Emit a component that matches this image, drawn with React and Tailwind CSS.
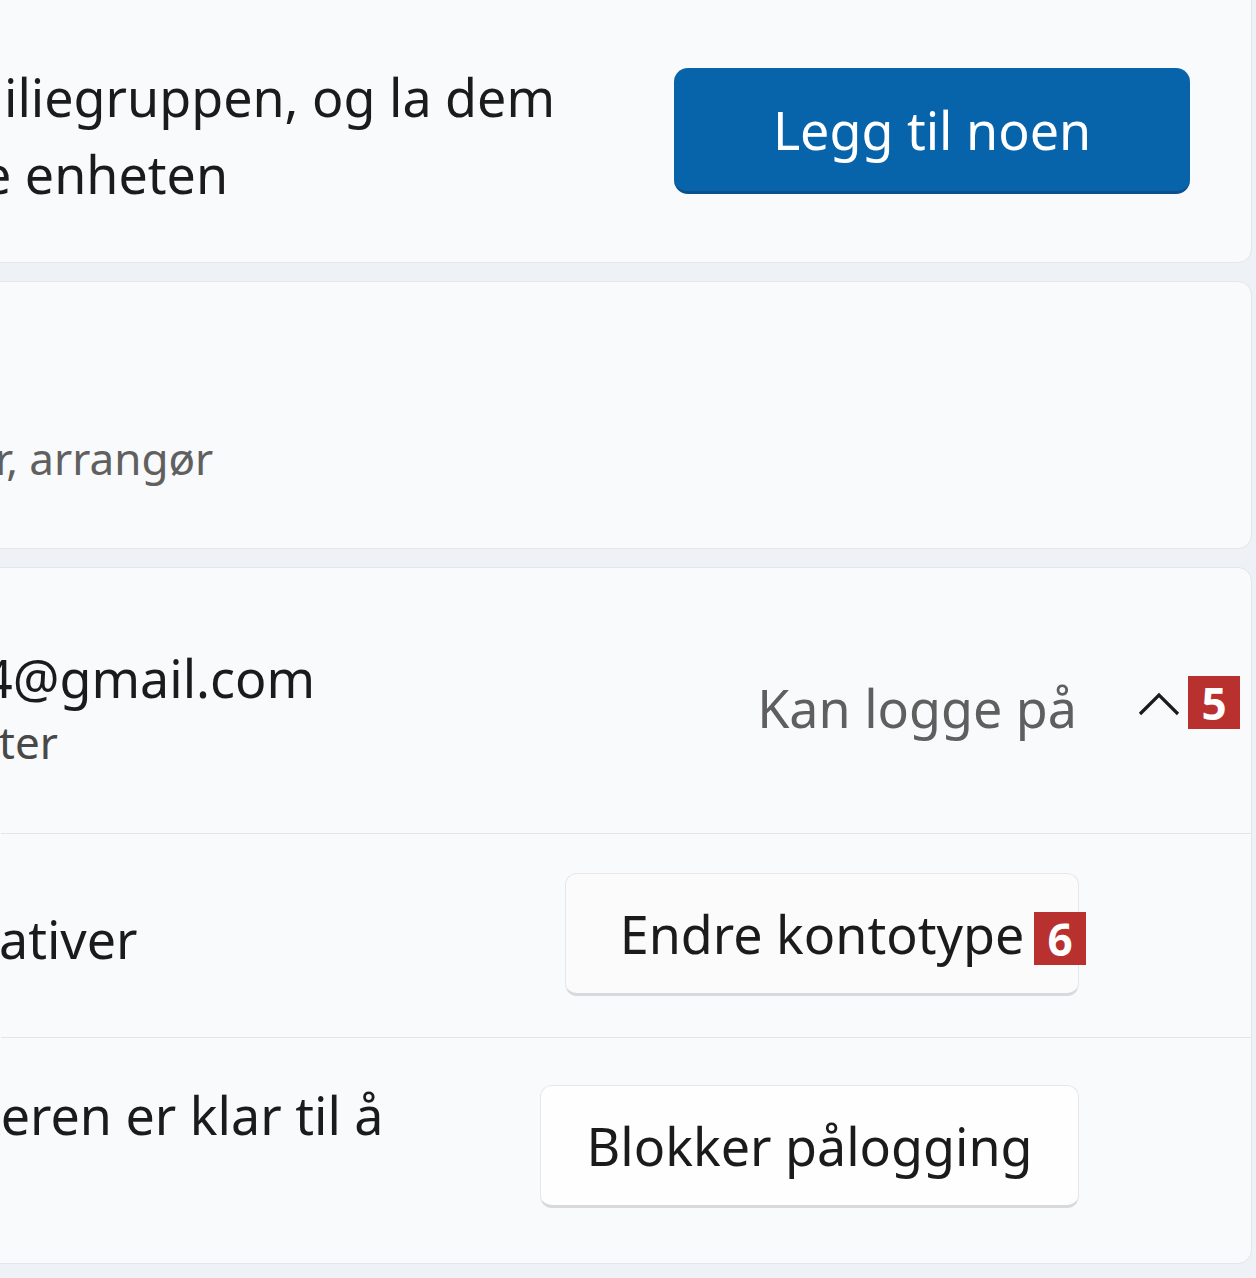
import React from "react";

function Badge({ n, className = "" }) {
  return (
    <span
      className={
        "flex h-[53px] w-[52px] items-center justify-center bg-[#b8312f] text-[44px] font-bold leading-none text-white font-['Open_Sans',sans-serif] " +
        className
      }
    >
      {n}
    </span>
  );
}

function ChevronUp() {
  return (
    <svg width="44" height="30" viewBox="0 0 44 30" fill="none">
      <path d="M3 27 L22 8 L41 27" stroke="#1b1b1b" strokeWidth="3.2" strokeLinejoin="miter" />
    </svg>
  );
}

export default function App() {
  return (
    <div className="h-[1278px] w-[1256px] overflow-hidden bg-[#eef2f6] font-['Noto_Sans',sans-serif] text-[#1b1b1b]">
      <div className="-ml-[40px] -mt-[20px] flex w-[1292px] flex-col gap-[20px]">
        {/* Familie: legg til medlem */}
        <div className="flex h-[283px] items-start justify-between rounded-[14px] border border-[#e2e5e9] bg-[#f9fafb] pl-[40px] pr-[61px]">
          <div className="mt-[77px] text-[52px] leading-[77px]">
            <div className="ml-[3px]">iliegruppen, og la dem</div>
            <div className="-ml-[19px]">e enheten</div>
          </div>
          <button className="mt-[87px] flex h-[126px] w-[516px] items-center justify-center rounded-[14px] border-b-[3px] border-[#0b4f8c] bg-[#0764aa] text-[52px] text-white">
            Legg til noen
          </button>
        </div>

        {/* Medlem */}
        <div className="-mt-[2px] h-[268px] rounded-[14px] border border-[#e2e5e9] bg-[#f9fafb] pl-[40px]">
          <div className="-ml-[6px] mt-[146px] text-[44px] leading-[60px] text-[#606060]">
            r, arrangør
          </div>
        </div>

        {/* Bruker utvidet */}
        <div className="-mt-[2px] flex h-[697px] flex-col rounded-[14px] border border-[#e2e5e9] bg-[#f9fafb] pl-[40px]">
          <div className="flex h-[266px] items-center border-b border-[#e3e6e9] pr-[11px]">
            <div className="flex-1 pt-[18px]">
              <div className="-ml-[18px] text-[52px] leading-[64px]">4@gmail.com</div>
              <div className="-ml-[2px] text-[44px] leading-[64px] text-[#484848]">ter</div>
            </div>
            <span className="mt-[14px] text-[52px] text-[#5f5f5f]">Kan logge på</span>
            <div className="ml-[60px] mt-[2px]">
              <ChevronUp />
            </div>
            <Badge n="5" className="ml-[7px] mt-[4px]" />
          </div>

          <div className="flex h-[204px] items-start border-b border-[#e3e6e9] pr-[172px]">
            <div className="-ml-[2px] mt-[70px] flex-1 text-[52px] leading-[70px]">ativer</div>
            <button className="relative mt-[39px] flex h-[123px] w-[514px] items-center justify-center rounded-[12px] border border-b-[3px] border-[#e5e7e9] border-b-[#d7d9dc] bg-[#fbfbfb] text-[52px]">
              Endre kontotype
              <Badge n="6" className="absolute right-[-8px] top-[38px]" />
            </button>
          </div>

          <div className="flex flex-1 items-start pr-[172px]">
            <div className="-ml-[28px] mt-[42px] flex-1 text-[52px] leading-[70px]">keren er klar til å</div>
            <button className="mt-[47px] flex h-[123px] w-[539px] items-center justify-center rounded-[12px] border border-b-[3px] border-[#e5e7e9] border-b-[#d7d9dc] bg-[#fefefe] text-[52px]">
              Blokker pålogging
            </button>
          </div>
        </div>
      </div>
    </div>
  );
}
